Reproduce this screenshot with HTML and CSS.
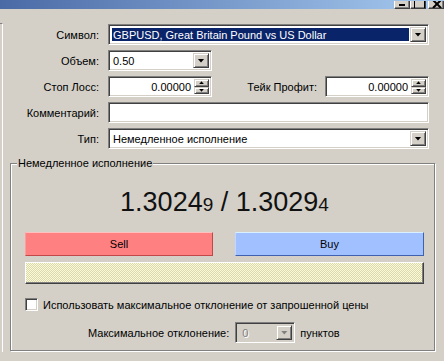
FILE: index.html
```html
<!DOCTYPE html>
<html lang="ru">
<head>
    <meta charset="UTF-8">
    <title>Ордер</title>
    <link rel="stylesheet" href="styles.css">
</head>
<body>
    <!-- Заголовок окна -->
    <div class="titlebar">
        <span class="wbtn min"></span>
        <span class="wbtn max"></span>
        <span class="wbtn close">
            <svg width="14" height="7" viewBox="0 0 14 7"><path d="M4 7 L12 -1 M12 7 L4 -1" stroke="#000" stroke-width="2"/></svg>
        </span>
    </div>

    <div class="main">
        <div class="side"></div>
        <div class="content">
            <div class="form-grid">
                <label>Символ:</label>
                <div class="field combo wide">
                    <span class="val selected">GBPUSD, Great Britain Pound vs US Dollar</span>
                    <span class="dd"><i class="arrow"></i></span>
                </div>

                <label>Объем:</label>
                <div class="field combo">
                    <span class="val">0.50</span>
                    <span class="dd"><i class="arrow"></i></span>
                </div>
                <span></span>
                <span></span>

                <label>Стоп Лосс:</label>
                <div class="field spin">
                    <span class="num">0.00000</span>
                    <span class="spin-btns">
                        <span class="sb"><i class="up"></i></span>
                        <span class="sb"><i class="down"></i></span>
                    </span>
                </div>
                <label class="tp">Тейк Профит:</label>
                <div class="field spin">
                    <span class="num">0.00000</span>
                    <span class="spin-btns">
                        <span class="sb"><i class="up"></i></span>
                        <span class="sb"><i class="down"></i></span>
                    </span>
                </div>

                <label>Комментарий:</label>
                <div class="field wide edit"></div>

                <label>Тип:</label>
                <div class="field combo wide">
                    <span class="val">Немедленное исполнение</span>
                    <span class="dd"><i class="arrow"></i></span>
                </div>
            </div>

            <div class="group">
                <span class="legend">Немедленное исполнение</span>

                <div class="prices">1.3024<span class="small">9</span> / 1.3029<span class="small">4</span></div>

                <div class="trade">
                    <div class="tbtn sell">Sell</div>
                    <div class="tbtn buy">Buy</div>
                </div>

                <div class="progress"></div>

                <div class="check-row">
                    <span class="checkbox"></span>
                    <span>Использовать максимальное отклонение от запрошенной цены</span>
                </div>

                <div class="dev-row">
                    <span>Максимальное отклонение:</span>
                    <div class="field combo disabled">
                        <span class="val">0</span>
                        <span class="dd"><i class="arrow"></i></span>
                    </div>
                    <span>пунктов</span>
                </div>
            </div>
        </div>
    </div>
</body>
</html>
```

FILE: styles.css
```css
* {
    box-sizing: border-box;
}
body {
    margin: 0;
    width: 444px;
    height: 361px;
    overflow: hidden;
    background: #d4d0c8;
    font-family: 'Liberation Sans', Arial, sans-serif;
    font-size: 11px;
    color: #000;
}

/* Заголовок окна */
.titlebar {
    height: 9px;
    background: linear-gradient(90deg, #4a6aa6, #a6caf0);
    display: flex;
    justify-content: flex-end;
    align-items: flex-end;
}
.wbtn {
    position: relative;
    width: 16px;
    height: 8px;
    overflow: hidden;
    background: #d4d0c8;
    border-left: 1px solid #fff;
    border-right: 1px solid #404040;
    border-bottom: 1px solid #404040;
    box-shadow: inset -1px -1px 0 #808080;
}
.wbtn.max {
    margin-right: 2px;
}
.wbtn.min::before {
    content: '';
    position: absolute;
    left: 4px;
    top: 3px;
    width: 6px;
    height: 2px;
    background: #000;
}
.wbtn.max::before {
    content: '';
    position: absolute;
    left: 3px;
    top: -4px;
    width: 9px;
    height: 10px;
    border: 1px solid #000;
}
.wbtn.close svg {
    display: block;
}

.main {
    display: flex;
}
.side {
    width: 3px;
    height: 329px;
    margin-top: 14px;
    border-top: 1px solid #808080;
    border-right: 1px solid #fff;
}
.content {
    flex: 1;
    padding-top: 15px;
}

/* Поля формы */
.form-grid {
    display: grid;
    grid-template-columns: 105px 104px 113px 104px;
    grid-auto-rows: 21px;
    row-gap: 5px;
}
.form-grid label {
    align-self: center;
    text-align: right;
    padding-right: 9px;
}
.form-grid label.tp {
    padding-right: 8px;
}
.wide {
    grid-column: 2 / -1;
}

.field {
    display: flex;
    height: 21px;
    padding: 2px;
    background: #fff;
    border: 1px solid;
    border-color: #808080 #fff #fff #808080;
    box-shadow: inset 1px 1px 0 #404040, inset -1px -1px 0 #d4d0c8;
}
.combo .val {
    flex: 1;
    margin: 1px;
    padding-left: 1px;
    line-height: 15px;
    white-space: nowrap;
    overflow: hidden;
}
.combo .val.selected {
    background: #0a246a;
    color: #fff;
}
.dd,
.sb {
    display: flex;
    align-items: center;
    justify-content: center;
    background: #d4d0c8;
    border: 1px solid;
    border-color: #d4d0c8 #404040 #404040 #d4d0c8;
    box-shadow: inset 1px 1px 0 #fff, inset -1px -1px 0 #808080;
}
.dd {
    width: 16px;
}
.arrow {
    display: block;
    width: 7px;
    height: 4px;
    background: #000;
    clip-path: polygon(0 0, 100% 0, 50% 100%);
}

.spin .num {
    flex: 1;
    text-align: right;
    padding-right: 3px;
    line-height: 17px;
}
.spin-btns {
    display: flex;
    flex-direction: column;
    width: 15px;
}
.sb {
    flex: 1;
}
.sb i {
    display: block;
    width: 5px;
    height: 3px;
    background: #000;
}
.sb .up {
    clip-path: polygon(50% 0, 100% 100%, 0 100%);
}
.sb .down {
    clip-path: polygon(0 0, 100% 0, 50% 100%);
}

/* Рамка группы */
.group {
    position: relative;
    width: 425px;
    height: 188px;
    margin: 14px 0 0 7px;
    padding: 23px 10px 0 14px;
    border: 1px solid #808080;
    box-shadow: inset 1px 1px 0 #fff, 1px 1px 0 #fff;
}
.group .legend {
    position: absolute;
    top: -7px;
    left: 6px;
    padding: 0 1px;
    line-height: 13px;
    background: #d4d0c8;
}

.prices {
    text-align: center;
    font-size: 27px;
    line-height: 31px;
    white-space: nowrap;
    color: #111;
}
.prices .small {
    font-size: 19px;
}

.trade {
    display: grid;
    grid-template-columns: 188px 189px;
    column-gap: 22px;
    margin-top: 12px;
}
.tbtn {
    height: 24px;
    line-height: 22px;
    text-align: center;
    border: 1px solid;
}
.sell {
    background: #ff8080;
    border-color: #ffc0c0 #c04848 #c04848 #ff9c9c;
}
.buy {
    background: #a0c0ff;
    border-color: #d8f0ff #4060b0 #4060b0 #c0d8ff;
}

.progress {
    height: 22px;
    margin-top: 6px;
    background: repeating-conic-gradient(#fcfcc4 0 25%, #d8d6c0 0 50%) 0 0 / 2px 2px;
    border: 1px solid;
    border-color: #fff #404040 #404040 #fff;
    box-shadow: inset -1px -1px 0 #808080;
}

.check-row {
    display: flex;
    align-items: center;
    gap: 5px;
    height: 13px;
    margin-top: 14px;
}
.checkbox {
    width: 13px;
    height: 13px;
    background: #fff;
    border: 1px solid;
    border-color: #808080 #fff #fff #808080;
    box-shadow: inset 1px 1px 0 #404040, inset -1px -1px 0 #d4d0c8;
}

.dev-row {
    display: flex;
    align-items: center;
    gap: 6px;
    height: 21px;
    margin-top: 11px;
    padding-left: 63px;
}
.dev-row .combo {
    width: 60px;
    margin-right: -1px;
}
.combo.disabled {
    background: #d4d0c8;
}
.combo.disabled .val {
    padding-left: 3px;
    color: #808080;
    text-shadow: 1px 1px 0 #fff;
}
.combo.disabled .arrow {
    background: #808080;
}
```
